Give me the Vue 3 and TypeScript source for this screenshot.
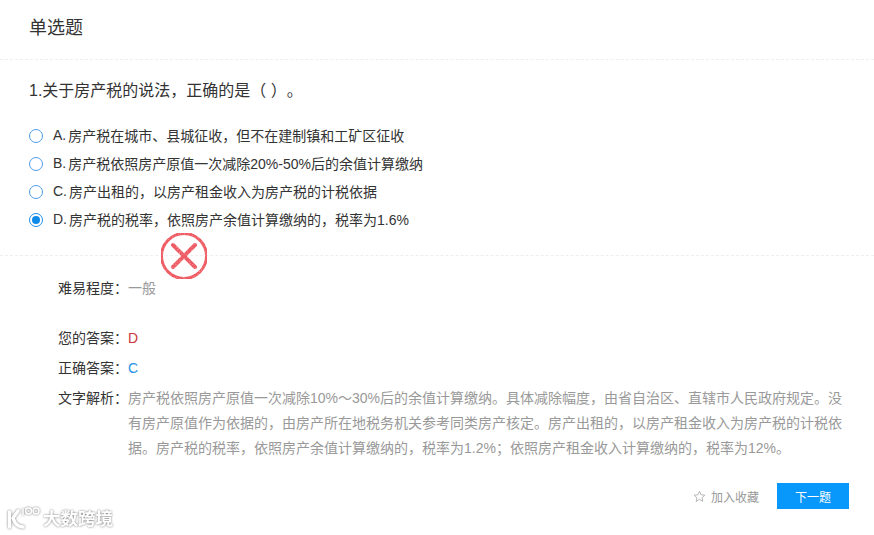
<template>
  <div class="page">
    <div class="head">单选题</div>

    <div class="question">
      <p class="stem">1.关于房产税的说法，正确的是（ ）<span class="stop">。</span></p>
      <ul class="options">
        <li v-for="opt in options" :key="opt.key" class="option">
          <span class="radio" :class="{ checked: opt.key === picked }"></span>
          <span class="opt-key">{{ opt.key }}.</span>
          <span>{{ opt.text }}</span>
        </li>
      </ul>
    </div>

    <div class="result">
      <!-- wrong answer stamp -->
      <svg class="stamp" width="50" height="50" viewBox="0 0 50 50">
        <defs>
          <filter id="worn" x="0" y="0" width="100%" height="100%">
            <feTurbulence type="fractalNoise" baseFrequency="0.8" numOctaves="2" seed="4" result="noise" />
            <feColorMatrix in="noise" type="matrix" values="0 0 0 0 0 0 0 0 0 0 0 0 0 0 0 0 0 0 -1.2 1.6" result="mask" />
            <feComposite in="SourceGraphic" in2="mask" operator="in" />
          </filter>
        </defs>
        <g filter="url(#worn)" fill="none" stroke="#ee5a62">
          <circle cx="25" cy="25" r="22.500" stroke-width="3" />
          <path d="M14 14 36 36M36 14 14 36" stroke-width="4" stroke-linecap="round" />
        </g>
      </svg>

      <div class="row level">
        <span class="label">难易程度：</span>
        <span class="gray">一般</span>
      </div>
      <div class="row">
        <span class="label">您的答案：</span>
        <span class="mine">D</span>
      </div>
      <div class="row">
        <span class="label">正确答案：</span>
        <span class="right">C</span>
      </div>
      <div class="row analysis">
        <span class="label">文字解析：</span>
        <p class="gray text">{{ analysis }}</p>
      </div>

      <div class="actions">
        <span class="fav">
          <svg width="13" height="13" viewBox="0 0 24 24">
            <path d="M12 2.500l2.900 6.300 6.900.8-5.100 4.700 1.400 6.800L12 17.200l-6.100 3.900 1.400-6.800-5.100-4.700 6.900-.8z" fill="none" stroke="#aaa" stroke-width="1.600" stroke-linejoin="round" />
          </svg>
          加入收藏
        </span>
        <button class="next" type="button">下一题</button>
      </div>
    </div>

    <div class="mark">
      <svg width="34" height="24" viewBox="0 0 34 24">
        <g fill="none" stroke="#fff" stroke-linecap="round">
          <path d="M2.500 6v15" stroke-width="3.400" />
          <path d="M11 5 6 12c1.500 5 5 9 10 9" stroke-width="3.400" />
          <path d="M16 3v6" stroke-width="1.500" />
          <circle cx="21.500" cy="5" r="3" stroke-width="1.500" />
          <circle cx="29" cy="5" r="3" stroke-width="1.500" />
        </g>
      </svg>
      <span>大数跨境</span>
    </div>
  </div>
</template>

<script setup lang="ts">
interface Option {
  key: string
  text: string
}

const picked = 'D'

const options: Option[] = [
  { key: 'A', text: '房产税在城市、县城征收，但不在建制镇和工矿区征收' },
  { key: 'B', text: '房产税依照房产原值一次减除20%-50%后的余值计算缴纳' },
  { key: 'C', text: '房产出租的，以房产租金收入为房产税的计税依据' },
  { key: 'D', text: '房产税的税率，依照房产余值计算缴纳的，税率为1.6%' },
]

const analysis =
  '房产税依照房产原值一次减除10%～30%后的余值计算缴纳。具体减除幅度，由省自治区、直辖市人民政府规定。没有房产原值作为依据的，由房产所在地税务机关参考同类房产核定。房产出租的，以房产租金收入为房产税的计税依据。房产税的税率，依照房产余值计算缴纳的，税率为1.2%；依照房产租金收入计算缴纳的，税率为12%。'
</script>

<style>
html,
body {
  margin: 0;
  background: #fff;
}
</style>

<style scoped>
.page {
  position: relative;
  width: 874px;
  height: 535px;
  overflow: hidden;
  background: #fff;
  color: #333;
  font-family: "Liberation Sans", "Noto Sans CJK SC", sans-serif;
  font-size: 14px;
}

.head {
  height: 59px;
  padding-left: 29px;
  line-height: 56px;
  font-size: 18px;
  border-bottom: 1px dashed #eee;
}

.question {
  padding: 0 29px;
  height: 195px;
  border-bottom: 1px dashed #eee;
}

.stem {
  margin: 0;
  padding-top: 20px;
  line-height: 22px;
  font-size: 16px;
}

.stop {
  display: inline-block;
}

.options {
  list-style: none;
  margin: 19px 0 0;
  padding: 0;
}

.option {
  display: flex;
  align-items: center;
  height: 28px;
}

.radio {
  position: relative;
  flex: none;
  box-sizing: border-box;
  width: 14px;
  height: 14px;
  margin: 2px 10px 0 0;
  border: 1px solid #4d9be8;
  border-radius: 50%;
}

.radio.checked {
  border-color: #1e8fe6;
}

.radio.checked::after {
  content: "";
  position: absolute;
  left: 2px;
  top: 2px;
  width: 8px;
  height: 8px;
  border-radius: 50%;
  background: #0e8ae8;
}

.opt-key {
  margin-right: 2px;
}

.result {
  position: relative;
  padding: 0 25px 0 58px;
}

.stamp {
  position: absolute;
  left: 158.500px;
  top: -25px;
}

.row {
  display: flex;
  line-height: 30px;
}

.level {
  padding-top: 17px;
  margin-bottom: 20px;
}

.label {
  flex: none;
  width: 70px;
}

.gray {
  color: #999;
}

.mine {
  color: #c8353b;
}

.right {
  color: #1e8fe6;
}

.text {
  margin: 0;
  width: 716px;
}

.analysis .text {
  padding-top: 3px;
  line-height: 25px;
}

.actions {
  display: flex;
  justify-content: flex-end;
  align-items: center;
  margin-top: 22px;
}

.fav {
  display: flex;
  align-items: center;
  gap: 5px;
  margin-right: 18px;
  font-size: 12px;
  color: #999;
}

.next {
  width: 72px;
  height: 26px;
  padding: 0;
  border: 0;
  background: #0897fb;
  color: #fff;
  font-family: inherit;
  font-size: 12px;
}

.mark {
  position: absolute;
  left: 7px;
  top: 505px;
  display: flex;
  align-items: center;
  gap: 2px;
  color: #fff;
  font-size: 17.500px;
  font-weight: 700;
  filter: drop-shadow(0 0 1.200px #777);
}
</style>
